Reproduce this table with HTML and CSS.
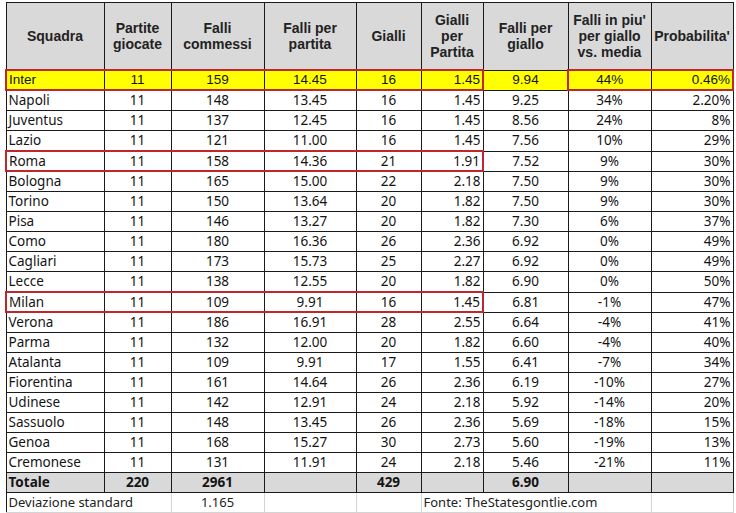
FILE: index.html
```html
<!DOCTYPE html>
<html>
<head>
<meta charset="utf-8">
<link rel="stylesheet" href="styles.css">
</head>
<body>
<div class="sheet">
<table class="tbl">
<colgroup>
<col style="width:98px"><col style="width:67px"><col style="width:93px"><col style="width:92px"><col style="width:65px"><col style="width:62px"><col style="width:85px"><col style="width:83px"><col style="width:82px">
</colgroup>
<thead>
<tr class="head">
<th>Squadra</th><th>Partite<br>giocate</th><th>Falli<br>commessi</th><th>Falli per<br>partita</th><th>Gialli</th><th>Gialli<br>per<br>Partita</th><th>Falli per<br>giallo</th><th>Falli in piu'<br>per giallo<br>vs. media</th><th>Probabilita'</th>
</tr>
</thead>
<tbody>
<tr class="row hl boxed"><td class="l bl">Inter</td><td class="c bx">11</td><td class="c bx">159</td><td class="c bx">14.45</td><td class="c bx">16</td><td class="r bx br">1.45</td><td class="c">9.94</td><td class="c bx bl">44%</td><td class="r bx br">0.46%</td></tr>
<tr class="row"><td class="l">Napoli</td><td class="c">11</td><td class="c">148</td><td class="c">13.45</td><td class="c">16</td><td class="r">1.45</td><td class="c">9.25</td><td class="c">34%</td><td class="r">2.20%</td></tr>
<tr class="row"><td class="l">Juventus</td><td class="c">11</td><td class="c">137</td><td class="c">12.45</td><td class="c">16</td><td class="r">1.45</td><td class="c">8.56</td><td class="c">24%</td><td class="r">8%</td></tr>
<tr class="row"><td class="l">Lazio</td><td class="c">11</td><td class="c">121</td><td class="c">11.00</td><td class="c">16</td><td class="r">1.45</td><td class="c">7.56</td><td class="c">10%</td><td class="r">29%</td></tr>
<tr class="row boxed"><td class="l bl bx">Roma</td><td class="c bx">11</td><td class="c bx">158</td><td class="c bx">14.36</td><td class="c bx">21</td><td class="r bx br">1.91</td><td class="c">7.52</td><td class="c">9%</td><td class="r">30%</td></tr>
<tr class="row"><td class="l">Bologna</td><td class="c">11</td><td class="c">165</td><td class="c">15.00</td><td class="c">22</td><td class="r">2.18</td><td class="c">7.50</td><td class="c">9%</td><td class="r">30%</td></tr>
<tr class="row"><td class="l">Torino</td><td class="c">11</td><td class="c">150</td><td class="c">13.64</td><td class="c">20</td><td class="r">1.82</td><td class="c">7.50</td><td class="c">9%</td><td class="r">30%</td></tr>
<tr class="row"><td class="l">Pisa</td><td class="c">11</td><td class="c">146</td><td class="c">13.27</td><td class="c">20</td><td class="r">1.82</td><td class="c">7.30</td><td class="c">6%</td><td class="r">37%</td></tr>
<tr class="row"><td class="l">Como</td><td class="c">11</td><td class="c">180</td><td class="c">16.36</td><td class="c">26</td><td class="r">2.36</td><td class="c">6.92</td><td class="c">0%</td><td class="r">49%</td></tr>
<tr class="row"><td class="l">Cagliari</td><td class="c">11</td><td class="c">173</td><td class="c">15.73</td><td class="c">25</td><td class="r">2.27</td><td class="c">6.92</td><td class="c">0%</td><td class="r">49%</td></tr>
<tr class="row"><td class="l">Lecce</td><td class="c">11</td><td class="c">138</td><td class="c">12.55</td><td class="c">20</td><td class="r">1.82</td><td class="c">6.90</td><td class="c">0%</td><td class="r">50%</td></tr>
<tr class="row boxed"><td class="l bl bx">Milan</td><td class="c bx">11</td><td class="c bx">109</td><td class="c bx">9.91</td><td class="c bx">16</td><td class="r bx br">1.45</td><td class="c">6.81</td><td class="c">-1%</td><td class="r">47%</td></tr>
<tr class="row"><td class="l">Verona</td><td class="c">11</td><td class="c">186</td><td class="c">16.91</td><td class="c">28</td><td class="r">2.55</td><td class="c">6.64</td><td class="c">-4%</td><td class="r">41%</td></tr>
<tr class="row"><td class="l">Parma</td><td class="c">11</td><td class="c">132</td><td class="c">12.00</td><td class="c">20</td><td class="r">1.82</td><td class="c">6.60</td><td class="c">-4%</td><td class="r">40%</td></tr>
<tr class="row"><td class="l">Atalanta</td><td class="c">11</td><td class="c">109</td><td class="c">9.91</td><td class="c">17</td><td class="r">1.55</td><td class="c">6.41</td><td class="c">-7%</td><td class="r">34%</td></tr>
<tr class="row"><td class="l">Fiorentina</td><td class="c">11</td><td class="c">161</td><td class="c">14.64</td><td class="c">26</td><td class="r">2.36</td><td class="c">6.19</td><td class="c">-10%</td><td class="r">27%</td></tr>
<tr class="row"><td class="l">Udinese</td><td class="c">11</td><td class="c">142</td><td class="c">12.91</td><td class="c">24</td><td class="r">2.18</td><td class="c">5.92</td><td class="c">-14%</td><td class="r">20%</td></tr>
<tr class="row"><td class="l">Sassuolo</td><td class="c">11</td><td class="c">148</td><td class="c">13.45</td><td class="c">26</td><td class="r">2.36</td><td class="c">5.69</td><td class="c">-18%</td><td class="r">15%</td></tr>
<tr class="row"><td class="l">Genoa</td><td class="c">11</td><td class="c">168</td><td class="c">15.27</td><td class="c">30</td><td class="r">2.73</td><td class="c">5.60</td><td class="c">-19%</td><td class="r">13%</td></tr>
<tr class="row"><td class="l">Cremonese</td><td class="c">11</td><td class="c">131</td><td class="c">11.91</td><td class="c">24</td><td class="r">2.18</td><td class="c">5.46</td><td class="c">-21%</td><td class="r">11%</td></tr>
<tr class="row tot"><td class="l">Totale</td><td class="c">220</td><td class="c">2961</td><td></td><td class="c">429</td><td></td><td class="c">6.90</td><td></td><td></td></tr>
<tr class="row dev"><td class="l" colspan="2">Deviazione standard</td><td class="c">1.165</td><td></td><td></td><td class="l" colspan="3">Fonte: TheStatesgontlie.com</td><td></td></tr>
</tbody>
</table>
</div>
</body>
</html>
```

FILE: styles.css
```css
html, body {
  margin: 0;
  padding: 0;
  background: #ffffff;
}
.sheet {
  padding: 2px 0 0 5px;
}
.tbl {
  border-collapse: collapse;
  table-layout: fixed;
  width: 727px;
  font-family: "Noto Sans", "Liberation Sans", sans-serif;
  font-size: 13.5px;
  color: #141414;
}
.tbl th, .tbl td {
  border: 1px solid #1a1a1a;
  padding: 0 2px;
  overflow: hidden;
  white-space: nowrap;
}
.head th {
  height: 66px;
  background: #d9d9d9;
  font-family: "Liberation Sans", Arial, sans-serif;
  font-weight: bold;
  font-size: 14px;
  line-height: 16px;
  color: #222;
  text-align: center;
  vertical-align: middle;
}
.row td {
  height: 19px;
  line-height: 19px;
  box-sizing: border-box;
}
.boxed td {
  height: 18px;
  line-height: 18px;
}
.l { text-align: left; }
.c { text-align: center; }
.r { text-align: right; }
.hl td {
  background: #ffff00;
  font-family: "Liberation Sans", Arial, sans-serif;
  font-size: 13.5px;
}
.tbl td.bx {
  border-top: 2px solid #c0272d;
  border-bottom: 2px solid #c0272d;
}
.tbl td.bl {
  border-left: 2px solid #c0272d;
}
.tbl td.br {
  border-right: 2px solid #c0272d;
}
.tbl td.bl.l {
  border-top: 2px solid #c0272d;
  border-bottom: 2px solid #c0272d;
}
.tot td {
  background: #d9d9d9;
  font-weight: bold;
}
.tbl .dev td {
  border: 1px solid #d4d4d4;
  color: #222;
  font-size: 13px;
}
.tbl .dev td:first-child {
  border-left: 1px solid #1a1a1a;
}
.tbl .tot td {
  border-bottom: 1px solid #1a1a1a;
}
```
